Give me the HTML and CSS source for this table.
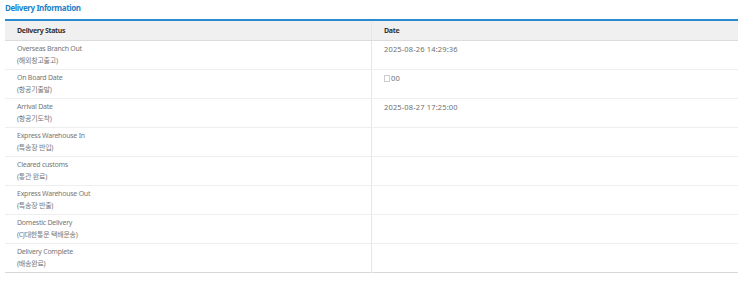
FILE: index.html
```html
<!DOCTYPE html>
<html lang="ko">
<head>
<meta charset="utf-8">
<title>Delivery Information</title>
<link rel="stylesheet" href="styles.css">
</head>
<body>
<div class="wrap">
  <h3 class="title">Delivery Information</h3>
  <table class="track">
    <thead>
      <tr><th class="c-status">Delivery Status</th><th class="c-date">Date</th></tr>
    </thead>
    <tbody>
      <tr><td><div>Overseas Branch Out</div><div>(해외창고출고)</div></td><td class="dt">2025-08-26 14:29:36</td></tr>
      <tr><td><div>On Board Date</div><div>(항공기출발)</div></td><td class="dt"><span class="tofu"></span>00</td></tr>
      <tr><td><div>Arrival Date</div><div>(항공기도착)</div></td><td class="dt">2025-08-27 17:25:00</td></tr>
      <tr><td><div>Express Warehouse In</div><div>(특송장 반입)</div></td><td class="dt"></td></tr>
      <tr><td><div>Cleared customs</div><div>(통관 완료)</div></td><td class="dt"></td></tr>
      <tr><td><div>Express Warehouse Out</div><div>(특송장 반출)</div></td><td class="dt"></td></tr>
      <tr><td><div>Domestic Delivery</div><div>(CJ대한통운 택배운송)</div></td><td class="dt"></td></tr>
      <tr><td><div>Delivery Complete</div><div>(배송완료)</div></td><td class="dt"></td></tr>
    </tbody>
  </table>
</div>
</body>
</html>
```
FILE: styles.css
```css
html, body {
  margin: 0;
  padding: 0;
  background: #fff;
}
body {
  font-family: "Noto Sans", "Noto Sans CJK KR", sans-serif;
}
.wrap {
  padding: 2px 12px 0 5px;
}
.title {
  margin: 0 0 5px 0;
  font-size: 8px;
  line-height: 12px;
  font-weight: 700;
  color: #1e82c8;
  letter-spacing: -0.4px;
}
.track {
  width: 733px;
  border-collapse: collapse;
  border-top: 2px solid #2a8ad0;
  border-bottom: 1px solid #d8d8d8;
  font-size: 7px;
}
.track th {
  background: #f0f0f0;
  color: #333;
  font-weight: 700;
  text-align: left;
  height: 19px;
  padding: 0 0 0 12px;
  border-bottom: 1px solid #dcdcdc;
  letter-spacing: -0.3px;
}
.track .c-status { width: 354px; }
.track .c-date { border-left: 1px solid #e6e6e6; }
.track td {
  height: 29px;
  padding: 2px 0 0 12px;
  vertical-align: top;
  color: #777;
  line-height: 12px;
  border-bottom: 1px solid #eeeeee;
  box-sizing: border-box;
  letter-spacing: -0.25px;
}
.track tbody tr:last-child td { border-bottom: none; }
.track td.dt {
  border-left: 1px solid #e6e6e6;
  color: #707070;
  padding-top: 2px;
  font-size: 7.5px;
  letter-spacing: 0.15px;
}
.tofu {
  display: inline-block;
  width: 4px;
  height: 5px;
  border: 1px solid #ccc;
  margin-right: 1px;
  vertical-align: -1px;
}
```
